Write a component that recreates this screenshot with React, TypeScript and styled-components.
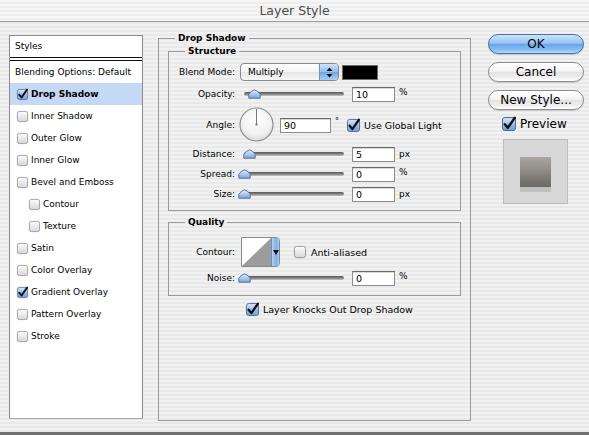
import React, { useId } from 'react';
import styled, { createGlobalStyle } from 'styled-components';

const GlobalStyle = createGlobalStyle`
  html, body {
    margin: 0;
    padding: 0;
  }
  body {
    font-family: "Lucida Grande", "DejaVu Sans", sans-serif;
    font-size: 9px;
    color: #000;
  }
`;

const pinstripe = 'repeating-linear-gradient(to bottom, #f1f1f1 0px, #f1f1f1 2px, #e9e9e9 2px, #e9e9e9 4px)';

const styleItems = [
    { label: 'Drop Shadow', checked: true, active: true },
    { label: 'Inner Shadow' },
    { label: 'Outer Glow' },
    { label: 'Inner Glow' },
    { label: 'Bevel and Emboss' },
    { label: 'Contour', indent: true },
    { label: 'Texture', indent: true },
    { label: 'Satin' },
    { label: 'Color Overlay' },
    { label: 'Gradient Overlay', checked: true },
    { label: 'Pattern Overlay' },
    { label: 'Stroke' },
];

const Checkbox = ({ checked = false, size = 11 }: { checked?: boolean; size?: number }) => {
    const id = useId();
    return (
        <CheckSvg width={size} height={size} viewBox='0 0 14 14'>
            <defs>
                <linearGradient id={id} x1='0' y1='0' x2='0' y2='1'>
                    {checked ? (
                        <>
                            <stop offset='0' stopColor='#dbe8fa' />
                            <stop offset='0.5' stopColor='#9dbfec' />
                            <stop offset='1' stopColor='#6f9ddb' />
                        </>
                    ) : (
                        <>
                            <stop offset='0' stopColor='#fdfdfd' />
                            <stop offset='1' stopColor='#d6d6d6' />
                        </>
                    )}
                </linearGradient>
            </defs>
            <rect
                x='0.5'
                y='0.5'
                width='13'
                height='13'
                rx='2.5'
                fill={`url(#${id})`}
                stroke={checked ? '#4f6a91' : '#8c8c8c'}
            />
            {checked && (
                <path
                    d='M2.8 7.2 L5.8 10.8 L12.8 0.8'
                    fill='none'
                    stroke='#101010'
                    strokeWidth='2.4'
                    strokeLinecap='round'
                    strokeLinejoin='round'
                />
            )}
        </CheckSvg>
    );
};

const Slider = ({ pos }: { pos: number }) => {
    const id = useId();
    return (
        <SliderBox>
            <Track />
            <Thumb $pos={pos} width='13' height='10' viewBox='0 0 13 10'>
                <defs>
                    <linearGradient id={id} x1='0' y1='0' x2='0' y2='1'>
                        <stop offset='0' stopColor='#e3edfa' />
                        <stop offset='0.55' stopColor='#a9c6ee' />
                        <stop offset='1' stopColor='#7ca3da' />
                    </linearGradient>
                </defs>
                <path
                    d='M6.5 0.8 C8.5 1.6 11 3.2 12.2 5.2 V9.2 H0.8 V5.2 C2 3.2 4.5 1.6 6.5 0.8 Z'
                    fill={`url(#${id})`}
                    stroke='#5b7299'
                    strokeWidth='1'
                />
            </Thumb>
        </SliderBox>
    );
};

const AngleDial = ({ angle }: { angle: number }) => {
    const id = useId();
    const rad = (angle * Math.PI) / 180;
    const x = 17.5 + Math.cos(rad) * 15.5;
    const y = 17.5 - Math.sin(rad) * 15.5;
    return (
        <DialSvg width='36' height='36' viewBox='0 0 36 36'>
            <defs>
                <radialGradient id={id} cx='0.5' cy='0.35' r='0.65'>
                    <stop offset='0' stopColor='#ffffff' />
                    <stop offset='0.7' stopColor='#f1f1f1' />
                    <stop offset='1' stopColor='#d9d9d9' />
                </radialGradient>
            </defs>
            <circle cx='17.5' cy='17.5' r='16.5' fill={`url(#${id})`} stroke='#8e8e8e' strokeWidth='1.2' />
            <line x1='17.5' y1='17.5' x2={x} y2={y} stroke='#777' strokeWidth='1' />
            <rect x='16.5' y='16.5' width='2' height='2' fill='#777' />
        </DialSvg>
    );
};

const App = () => (
    <>
        <GlobalStyle />
        <Window>
            <TitleBar>Layer Style</TitleBar>
            <Body>
                <Sidebar>
                    <SidebarHeader>Styles</SidebarHeader>
                    <SidebarItem $plain>Blending Options: Default</SidebarItem>
                    {styleItems.map((item) => (
                        <SidebarItem key={item.label} $active={item.active} $indent={item.indent}>
                            <Checkbox checked={item.checked} size={11} />
                            {item.label}
                        </SidebarItem>
                    ))}
                </Sidebar>

                <Main>
                    <Group>
                        <Legend $ml={7}>Drop Shadow</Legend>
                        <SubGroup $pt={5} $pb={6}>
                            <Legend>Structure</Legend>
                            <Row $h={20}>
                                <Label>Blend Mode:</Label>
                                <Popup>
                                    <PopupText>Multiply</PopupText>
                                    <PopupArrows>
                                        <svg width='7' height='11' viewBox='0 0 7 11'>
                                            <path d='M3.5 0.5 L6.5 4 H0.5 Z M3.5 10.5 L6.5 7 H0.5 Z' fill='#111' />
                                        </svg>
                                    </PopupArrows>
                                </Popup>
                                <Swatch />
                            </Row>
                            <Row $h={20} $mt={2}>
                                <Label>Opacity:</Label>
                                <Slider pos={10} />
                                <Field>10</Field>
                                <Unit>%</Unit>
                            </Row>
                            <Row $h={36} $mt={3}>
                                <Label>Angle:</Label>
                                <AngleDial angle={90} />
                                <Field $w={51} $ml={5}>90</Field>
                                <Degree>°</Degree>
                                <CheckLabel $ml={8}>
                                    <Checkbox checked size={13} />
                                    Use Global Light
                                </CheckLabel>
                            </Row>
                            <Row $h={20} $mt={1}>
                                <Label>Distance:</Label>
                                <Slider pos={5} />
                                <Field>5</Field>
                                <Unit $px>px</Unit>
                            </Row>
                            <Row $h={20}>
                                <Label>Spread:</Label>
                                <Slider pos={0} />
                                <Field>0</Field>
                                <Unit>%</Unit>
                            </Row>
                            <Row $h={20}>
                                <Label>Size:</Label>
                                <Slider pos={0} />
                                <Field>0</Field>
                                <Unit $px>px</Unit>
                            </Row>
                        </SubGroup>

                        <SubGroup $mt={5} $pt={9} $pb={7}>
                            <Legend>Quality</Legend>
                            <Row $h={30}>
                                <Label>Contour:</Label>
                                <ContourPicker>
                                    <ContourCurve>
                                        <svg width='29' height='28' viewBox='0 0 29 28' preserveAspectRatio='none'>
                                            <polygon points='0,28 29,0 29,28' fill='#9c9c9c' />
                                        </svg>
                                    </ContourCurve>
                                    <ContourArrow>
                                        <svg width='6' height='5' viewBox='0 0 6 5'>
                                            <path d='M0 0 H6 L3 5 Z' fill='#111' />
                                        </svg>
                                    </ContourArrow>
                                </ContourPicker>
                                <CheckLabel $ml={14} $gap={5}>
                                    <Checkbox size={12} />
                                    Anti-aliased
                                </CheckLabel>
                            </Row>
                            <Row $h={20} $mt={1}>
                                <Label>Noise:</Label>
                                <Slider pos={0} />
                                <Field>0</Field>
                                <Unit>%</Unit>
                            </Row>
                        </SubGroup>

                        <KnockoutRow>
                            <CheckLabel $gap={4}>
                                <Checkbox checked size={13} />
                                Layer Knocks Out Drop Shadow
                            </CheckLabel>
                        </KnockoutRow>
                    </Group>
                </Main>

                <Actions>
                    <Button $primary>OK</Button>
                    <Button>Cancel</Button>
                    <Button>New Style...</Button>
                    <PreviewToggle>
                        <Checkbox checked size={14} />
                        Preview
                    </PreviewToggle>
                    <PreviewBox>
                        <PreviewSwatch />
                    </PreviewBox>
                </Actions>
            </Body>
        </Window>
    </>
);

export default App;

const Window = styled.div`
    width: 589px;
    height: 435px;
    box-sizing: border-box;
    display: flex;
    flex-direction: column;
    background: ${pinstripe};
    border-bottom: 3px solid #6f6f6f;
    overflow: hidden;
`;

const TitleBar = styled.div`
    height: 21px;
    line-height: 22px;
    flex-shrink: 0;
    text-align: center;
    font-size: 12.5px;
    color: #4c4c4c;
    background: repeating-linear-gradient(to bottom, #f6f6f6 0px, #f6f6f6 2px, #eeeeee 2px, #eeeeee 4px);
    border-bottom: 1px solid #9c9c9c;
`;

const Body = styled.div`
    flex: 1;
    display: flex;
    align-items: flex-start;
    padding: 10px 5px 0 9px;
`;

const Sidebar = styled.div`
    width: 134px;
    height: 384px;
    margin-top: 3px;
    box-sizing: border-box;
    background: #fff;
    border: 1px solid #8c8c8c;
    border-bottom-color: #a8a8a8;
`;

const SidebarHeader = styled.div`
    height: 21px;
    line-height: 21px;
    padding-left: 5px;
    border-bottom: 4px double #111;
`;

const SidebarItem = styled.div<{ $active?: boolean; $indent?: boolean; $plain?: boolean }>`
    height: 22px;
    display: flex;
    align-items: center;
    gap: 3px;
    padding-left: ${(p) => (p.$plain ? 5 : p.$indent ? 19 : 7)}px;
    background: ${(p) => (p.$active ? '#c5d9f5' : 'transparent')};
    font-weight: ${(p) => (p.$active ? 'bold' : 'normal')};
    white-space: nowrap;
`;

const CheckSvg = styled.svg`
    display: block;
    flex-shrink: 0;
    overflow: visible;
`;

const Main = styled.div`
    width: 313px;
    margin-left: 15px;
`;

const Group = styled.fieldset`
    margin: 0;
    padding: 0 9px 0 9px;
    height: 389px;
    box-sizing: border-box;
    border: 1px solid #9a9a9a;
    min-width: 0;
`;

const SubGroup = styled.fieldset<{ $mt?: number; $pt: number; $pb: number }>`
    margin: ${(p) => p.$mt ?? 1}px 0 0;
    padding: ${(p) => p.$pt}px 0 ${(p) => p.$pb}px;
    border: 1px solid #9a9a9a;
    min-width: 0;
`;

const Legend = styled.legend<{ $ml?: number }>`
    margin-left: ${(p) => p.$ml ?? 16}px;
    padding: 0 3px;
    font-weight: bold;
    line-height: 12px;
`;

const Row = styled.div<{ $h: number; $mt?: number }>`
    display: flex;
    align-items: center;
    height: ${(p) => p.$h}px;
    margin-top: ${(p) => p.$mt ?? 0}px;
`;

const Label = styled.div`
    width: 66px;
    flex-shrink: 0;
    text-align: right;
    white-space: nowrap;
`;

const Popup = styled.div`
    width: 99px;
    height: 18px;
    margin-left: 5px;
    box-sizing: border-box;
    display: flex;
    border: 1px solid #8a8a8a;
    border-radius: 4px;
    overflow: hidden;
    background: linear-gradient(to bottom, #ffffff 0%, #f4f4f4 50%, #e6e6e6 51%, #f7f7f7 100%);
`;

const PopupText = styled.div`
    flex: 1;
    padding-left: 7px;
    line-height: 16px;
`;

const PopupArrows = styled.div`
    width: 18px;
    display: flex;
    align-items: center;
    justify-content: center;
    border-left: 1px solid #6d8fbf;
    background: linear-gradient(to bottom, #cfe2fa 0%, #94bdf0 50%, #6fa3e6 51%, #a9cff7 100%);
`;

const Swatch = styled.div`
    width: 36px;
    height: 15px;
    margin-left: 3px;
    box-sizing: border-box;
    background: #000;
    border: 1px solid #6a6a6a;
`;

const SliderBox = styled.div`
    position: relative;
    width: 112px;
    height: 20px;
    flex-shrink: 0;
    margin-left: 5px;
    display: flex;
    align-items: center;
`;

const Track = styled.div`
    margin-left: 4px;
    width: 100px;
    height: 4px;
    border-radius: 2px;
    background: linear-gradient(to bottom, #545454, #8e8e8e 60%, #c4c4c4);
`;

const Thumb = styled.svg<{ $pos: number }>`
    position: absolute;
    left: ${(p) => p.$pos - 2}px;
    top: 5px;
    display: block;
`;

const Field = styled.div<{ $w?: number; $ml?: number }>`
    width: ${(p) => p.$w ?? 43}px;
    height: 15px;
    margin-left: ${(p) => p.$ml ?? 0}px;
    box-sizing: border-box;
    padding-left: 3px;
    line-height: 14px;
    font-size: 9.5px;
    background: #fff;
    border: 1px solid #8c8c8c;
    border-top-color: #6a6a6a;
    box-shadow: inset 0 1px 0 #d8d8d8;
`;

const Unit = styled.div<{ $px?: boolean }>`
    margin-left: 4px;
    margin-bottom: ${(p) => (p.$px ? 1 : 4)}px;
`;

const DialSvg = styled.svg`
    display: block;
    margin-left: 4px;
    flex-shrink: 0;
`;

const Degree = styled.div`
    margin-left: 4px;
    align-self: flex-start;
    padding-top: 10px;
    font-size: 8px;
`;

const CheckLabel = styled.div<{ $ml?: number; $gap?: number }>`
    display: flex;
    align-items: center;
    gap: ${(p) => p.$gap ?? 4}px;
    margin-left: ${(p) => p.$ml ?? 0}px;
    font-size: 9.5px;
    white-space: nowrap;
`;

const ContourPicker = styled.div`
    width: 39px;
    height: 30px;
    margin-left: 6px;
    box-sizing: border-box;
    display: flex;
    border: 1px solid #8a8a8a;
    border-radius: 0 4px 4px 0;
    overflow: hidden;
`;

const ContourCurve = styled.div`
    flex: 1;
    background: #fff;
    svg {
        display: block;
    }
`;

const ContourArrow = styled.div`
    width: 9px;
    display: flex;
    align-items: center;
    justify-content: center;
    border-left: 1px solid #6d8fbf;
    background: linear-gradient(to right, #b4d2f7, #7eaeea 60%, #a7cbf5);
`;

const KnockoutRow = styled.div`
    height: 20px;
    margin-top: 3px;
    display: flex;
    align-items: center;
    padding-left: 78px;
`;

const Actions = styled.div`
    width: 96px;
    margin-left: 17px;
    margin-top: 2px;
    display: flex;
    flex-direction: column;
`;

const Button = styled.div<{ $primary?: boolean }>`
    height: 20px;
    margin-bottom: 8px;
    box-sizing: border-box;
    border-radius: 10px;
    text-align: center;
    line-height: 18px;
    font-size: 12px;
    border: 1px solid ${(p) => (p.$primary ? '#4a70a6' : '#8d8d8d')};
    background: ${(p) =>
        p.$primary
            ? 'linear-gradient(to bottom, #cde3fb 0%, #97c3f3 45%, #6aa5ea 52%, #8cc0f5 85%, #b7dafb 100%)'
            : 'linear-gradient(to bottom, #ffffff 0%, #f4f4f4 45%, #e3e3e3 52%, #f2f2f2 85%, #ffffff 100%)'};
    box-shadow: 0 1px 1px rgba(0, 0, 0, 0.15);
`;

const PreviewToggle = styled.div`
    height: 18px;
    margin-top: -3px;
    padding-left: 14px;
    display: flex;
    align-items: center;
    gap: 4px;
    font-size: 12px;
`;

const PreviewBox = styled.div`
    width: 65px;
    height: 65px;
    margin: 6px 0 0 15px;
    box-sizing: border-box;
    padding-top: 17px;
    display: flex;
    justify-content: center;
    background: #d7d7d7;
    border: 1px solid #bcbcbc;
`;

const PreviewSwatch = styled.div`
    width: 31px;
    height: 30px;
    background: linear-gradient(to bottom, #aca79f, #6b6966);
    box-shadow: 0 5px 0 #bfbfbf;
`;
